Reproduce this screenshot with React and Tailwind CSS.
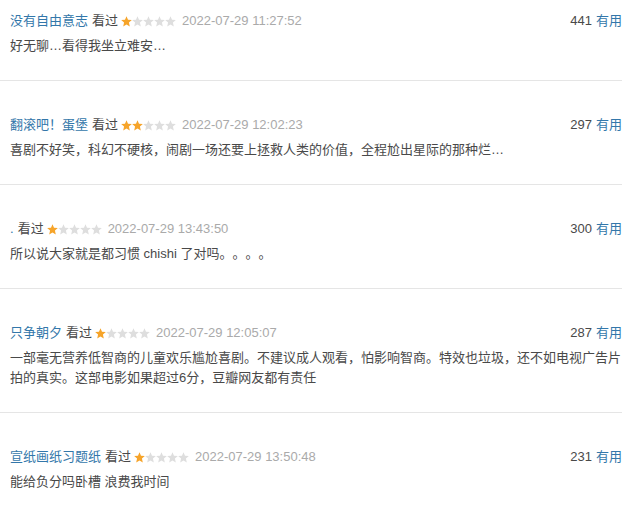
import React from "react";

const reviews = [
  { name: "没有自由意志", stars: 1, date: "2022-07-29 11:27:52", votes: 441, text: "好无聊…看得我坐立难安…" },
  { name: "翻滚吧！蛋堡", stars: 2, date: "2022-07-29 12:02:23", votes: 297, text: "喜剧不好笑，科幻不硬核，闹剧一场还要上拯救人类的价值，全程尬出星际的那种烂…" },
  { name: ".", stars: 1, date: "2022-07-29 13:43:50", votes: 300, text: "所以说大家就是都习惯 chishi 了对吗。。。。" },
  { name: "只争朝夕", stars: 1, date: "2022-07-29 12:05:07", votes: 287, text: "一部毫无营养低智商的儿童欢乐尴尬喜剧。不建议成人观看，怕影响智商。特效也垃圾，还不如电视广告片拍的真实。这部电影如果超过6分，豆瓣网友都有责任" },
  { name: "宣纸画纸习题纸", stars: 1, date: "2022-07-29 13:50:48", votes: 231, text: "能给负分吗卧槽 浪费我时间" },
];

function Star({ on }) {
  return (
    <svg width="11" height="11" viewBox="0 0 24 24" className="block">
      <polygon
        points="12,0.5 15.3,8 23.6,8.8 17.3,14.4 19.2,22.8 12,18.4 4.8,22.8 6.7,14.4 0.4,8.8 8.7,8"
        fill={on ? "#f6a42a" : "#dedede"}
      />
    </svg>
  );
}

function Stars({ n }) {
  return (
    <span className="flex items-center ml-[3px]">
      {[0, 1, 2, 3, 4].map((i) => (
        <Star key={i} on={i < n} />
      ))}
    </span>
  );
}

export default function App() {
  return (
    <div
      className="w-[622px] bg-white text-[13px] leading-[20px] text-[#494949] [text-spacing-trim:space-all]"
      style={{ fontFamily: '"Liberation Sans", Arial, "Noto Sans CJK SC", sans-serif' }}
    >
      {reviews.map((r, i) => (
        <div
          key={i}
          className={`pl-[10px] pb-[24px] border-b border-[#e5e5e5] ${i === 0 ? "pt-[11px]" : "pt-[34px]"}`}
        >
          <div className="flex items-center justify-between">
            <div className="flex items-center">
              <span className="text-[#3377aa]">{r.name}</span>
              <span className="ml-[4px]">看过</span>
              <Stars n={r.stars} />
              <span className="ml-[6px] text-[#aaaaaa]">{r.date}</span>
            </div>
            <div className="flex items-center">
              <span>{r.votes}</span>
              <span className="ml-[4px] text-[#3377aa]">有用</span>
            </div>
          </div>
          <p className="mt-[5px]">{r.text}</p>
        </div>
      ))}
    </div>
  );
}
